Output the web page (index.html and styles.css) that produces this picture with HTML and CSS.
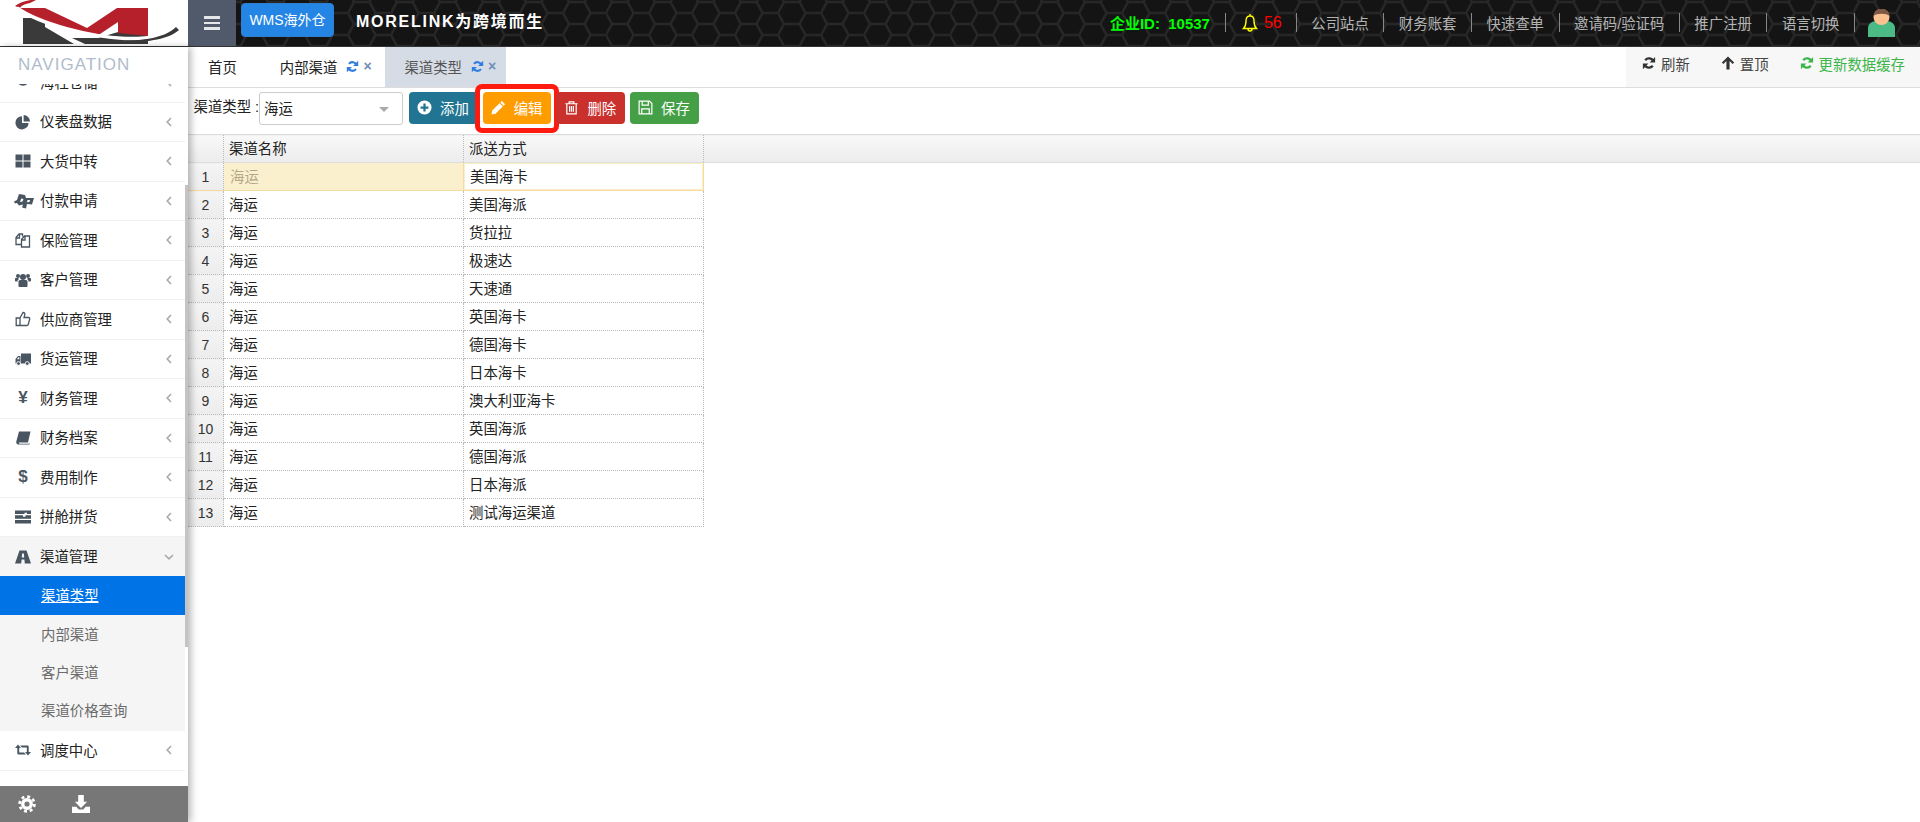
FILE: index.html
```html
<!DOCTYPE html>
<html lang="zh-CN">
<head>
<meta charset="utf-8">
<title>渠道类型</title>
<link rel="stylesheet" href="styles.css">
</head>
<body>
<svg class="defs" aria-hidden="true">
  <defs>
    <symbol id="i-pie" viewBox="0 0 16 16"><path d="M7 2.2a6.600 6.600 0 1 0 6.600 6.800H7z"/><path d="M8.600 1v6.400H15A6.500 6.500 0 0 0 8.600 1z"/></symbol>
    <symbol id="i-th" viewBox="0 0 16 16"><path d="M.5 1.500h7v6h-7zM8.500 1.500h7v6h-7zM.5 8.500h7v6h-7zM8.500 8.500h7v6h-7z"/></symbol>
    <symbol id="i-pay" viewBox="0 0 20 16"><path fill-rule="evenodd" d="M0 8.500l3-1.500L5 1l6 1 1 3 8 0-2 6.500-5-.5-1 4.500-4-1 1-3-4 1-2-2.500-2 .5zM7.200 5.500L6 9l2.500-.5 1-2.500zM13.500 7l-.5 2.200 2.500-.2.500-2z"/></symbol>
    <symbol id="i-files" viewBox="0 0 16 16"><path class="ol" d="M6 12.500H1V5.500l3-3.500h3.500v2.500M1 6h3.500V2.500M6.500 7.500l3-3.500h5v11h-8zM6.500 8h3.500V4.500"/></symbol>
    <symbol id="i-users" viewBox="0 0 16 16"><circle cx="8" cy="5" r="3"/><circle cx="3" cy="4" r="2"/><circle cx="13" cy="4" r="2"/><path d="M3.500 9.500c0-1 1-1.500 2-1.500h5c1 0 2 .5 2 1.500V14c0 .6-.5 1-1 1h-7c-.5 0-1-.4-1-1z"/><path d="M0 7c0-.6.4-1 1-1h2l1 1c-1 .5-1.500 1-1.500 2.500H1c-.6 0-1-.4-1-1zM16 7c0-.6-.4-1-1-1h-2l-1 1c1 .5 1.500 1 1.500 2.500H15c.6 0 1-.4 1-1z"/></symbol>
    <symbol id="i-thumb" viewBox="0 0 16 16"><path class="ol" d="M5 7l3-5.500c1.500 0 2.200 1 1.700 2.500L9 6.500h4.500c1 0 1.400 1 1.100 2l-1.400 5c-.2.7-.7 1-1.500 1H5zM1.200 7H5v7.500H1.200z"/></symbol>
    <symbol id="i-truck" viewBox="0 0 16 16"><path d="M6 2.500h10v10H6zM5.500 5H3L.5 8v4.500h5z"/><path class="cabw" d="M3.300 6.200h1v2H2z"/><circle class="wheel" cx="3.500" cy="12.500" r="1.900"/><circle class="wheel" cx="12.200" cy="12.500" r="1.900"/></symbol>
    <symbol id="i-book" viewBox="0 0 16 16"><path d="M4 1.500h11.500L13 12.500H4.500c-1 0-1 1.200 0 1.200H14l.5-1.500v2.300H3.500C1.500 14.500 1 13 1.300 11.500z"/></symbol>
    <symbol id="i-bars" viewBox="0 0 16 16"><path d="M0 1.500h16V5h-4V3.800H9.500V5H0zM0 6.200h8v1.500h2.500V6.200H16v3.500H0zM0 11h16v3.500H0z"/></symbol>
    <symbol id="i-road" viewBox="0 0 16 16"><path fill-rule="evenodd" d="M4.500 1.500h7l4.500 13H9.800l-.4-4H6.600l-.4 4H0zM7.100 4.500h1.800l.3 4H6.800z"/></symbol>
    <symbol id="i-retweet" viewBox="0 0 16 16"><path d="M0 6l3-3.500L6 6H4.200v4.500H9l2 2H3.500c-.7 0-1.200-.5-1.200-1.200V6zM16 10l-3 3.500-3-3.500h1.800V5.500H7l-2-2h7.500c.7 0 1.200.5 1.200 1.200V10z"/></symbol>
    <symbol id="i-refresh" viewBox="0 0 16 16"><path class="ol2" d="M13 6.500A5.300 5.300 0 0 0 3.700 4.800M3 9.500a5.300 5.300 0 0 0 9.300 1.700"/><path d="M15 1v6.300H8.700zM1 15V8.700h6.300z"/></symbol>
    <symbol id="i-up" viewBox="0 0 16 16"><path d="M8 .5l7 7-1.700 1.700-3.500-3.500v9.800H6.200V5.700L2.700 9.200 1 7.500z"/></symbol>
    <symbol id="i-plus" viewBox="0 0 16 16"><path fill-rule="evenodd" d="M8 .5a7.500 7.500 0 1 0 0 15 7.500 7.500 0 0 0 0-15zM6.800 3.800h2.400v3h3v2.400h-3v3H6.800v-3h-3V6.800h3z"/></symbol>
    <symbol id="i-pencil" viewBox="0 0 16 16"><path d="M11.500 1L15 4.500l-1.600 1.600-3.500-3.500zM9.100 3.400l3.500 3.500-7.800 7.800-4.300.8.8-4.300z"/></symbol>
    <symbol id="i-trash" viewBox="0 0 16 16"><path class="ol" d="M1.500 4h13M5.500 4V2h5v2M3 4v10.800h10V4M6 6.500v6M8 6.500v6M10 6.500v6"/></symbol>
    <symbol id="i-save" viewBox="0 0 16 16"><path class="ol" d="M1.200 1.200h11l2.600 2.600v11H1.200zM4.500 1.500v4h6.500v-4M4 14.500v-5h8v5"/></symbol>
    <symbol id="i-gear" viewBox="0 0 16 16"><circle class="gear-t" cx="8" cy="8" r="6.600"/><circle class="gear-r" cx="8" cy="8" r="3.800"/></symbol>
    <symbol id="i-down" viewBox="0 0 16 16"><path d="M5.500 0h5v6h3L8 11.500 2.500 6h3zM0 10.500h3.800L6 12.800h4l2.200-2.300H16V16H0z"/></symbol>
    <symbol id="i-anchor" viewBox="0 0 16 16"><path class="ol" d="M1 3c1 5 4 8 7 8s6-3 7-8M8 3v8M4 8l4 3 4-3"/></symbol>
    <symbol id="i-left" viewBox="0 0 6 10"><path class="chev" d="M5 1L1.200 5 5 9"/></symbol>
    <symbol id="i-chevd" viewBox="0 0 10 6"><path class="chev" d="M1 1l4 3.800L9 1"/></symbol>
  </defs>
</svg>

<header class="topbar">
  <svg class="hex" aria-hidden="true">
    <defs>
      <pattern id="hexp" x="4" y="2" width="43" height="22" patternUnits="userSpaceOnUse">
        <path d="M0 11L6 0H21.500L27.500 11L21.500 22H6ZM27.500 11H43" fill="none" stroke="#272727" stroke-width="2.500"/>
      </pattern>
    </defs>
    <rect width="100%" height="100%" fill="url(#hexp)"/>
  </svg>
  <a class="logo">
    <svg viewBox="0 0 188 46" width="188" height="46" aria-label="logo">
      <path fill="#3a3a3a" d="M23 18h22v26H23zM45 27l29 17H45zM72 38l26 0 20-6v12H85zM118 30h30v14h-30z"/>
      <path fill="#b5202a" d="M20 8h25l42 20 30-20h31v28l-30-3V22l-18 12h-8C60 30 35 20 20 8zM15 6C20 2 28 0 38-1L30 3c-6 1-9 3-10 5z"/>
      <path fill="none" stroke="#fff" stroke-width="3.500" d="M17 8C40 24 90 37 125 38.500c20 .5 40-2 52-9"/>
      <path fill="#3a3a3a" d="M105 40c28 2 58 0 71-13l3 3c-13 12-48 14-74 11z"/>
    </svg>
  </a>
  <button class="burger" aria-label="menu"><span></span><span></span><span></span></button>
  <a class="wms">WMS海外仓</a>
  <h1 class="brand">MORELINK为跨境而生</h1>
  <nav class="topnav">
    <span class="corp">企业ID:&nbsp;&nbsp;10537</span>
    <i class="sep"></i>
    <span class="alert">
      <svg class="bell" viewBox="0 0 16 20"><path d="M8 3C5 3 4 5 4 8c0 3.500-1 6-2.500 7.500h13C13 14 12 11.500 12 8c0-3-1-5-4-5zM6 16a2 2 0 0 0 4 0M8 1v2"/></svg>
      <b>56</b>
    </span>
    <i class="sep"></i><a>公司站点</a>
    <i class="sep"></i><a>财务账套</a>
    <i class="sep"></i><a>快速查单</a>
    <i class="sep"></i><a>邀请码/验证码</a>
    <i class="sep"></i><a>推广注册</a>
    <i class="sep"></i><a>语言切换</a>
    <i class="sep"></i>
    <svg class="avatar" viewBox="0 0 27 28"><path fill="#4cba85" d="M0 28v-9c0-4 4-7 8-7h11c4 0 8 3 8 7v9z"/><circle cx="13.500" cy="8" r="8" fill="#fbc190"/><path fill="#7e5a46" d="M5.500 7a8 7.500 0 0 1 16 0c-3-3-13-3-16 0z"/></svg>
  </nav>
</header>

<div class="shell">
  <aside class="sidebar">
    <div class="navhead">NAVIGATION</div>
    <div class="navscroll">
      <ul class="menu">
        <li class="item first"><svg class="ic"><use href="#i-anchor"/></svg><span>海柱仓储</span><svg class="ar"><use href="#i-left"/></svg></li>
        <li class="item"><svg class="ic"><use href="#i-pie"/></svg><span>仪表盘数据</span><svg class="ar"><use href="#i-left"/></svg></li>
        <li class="item"><svg class="ic"><use href="#i-th"/></svg><span>大货中转</span><svg class="ar"><use href="#i-left"/></svg></li>
        <li class="item"><svg class="ic wide"><use href="#i-pay"/></svg><span>付款申请</span><svg class="ar"><use href="#i-left"/></svg></li>
        <li class="item"><svg class="ic"><use href="#i-files"/></svg><span>保险管理</span><svg class="ar"><use href="#i-left"/></svg></li>
        <li class="item"><svg class="ic"><use href="#i-users"/></svg><span>客户管理</span><svg class="ar"><use href="#i-left"/></svg></li>
        <li class="item"><svg class="ic"><use href="#i-thumb"/></svg><span>供应商管理</span><svg class="ar"><use href="#i-left"/></svg></li>
        <li class="item"><svg class="ic"><use href="#i-truck"/></svg><span>货运管理</span><svg class="ar"><use href="#i-left"/></svg></li>
        <li class="item"><em class="ic gl">¥</em><span>财务管理</span><svg class="ar"><use href="#i-left"/></svg></li>
        <li class="item"><svg class="ic"><use href="#i-book"/></svg><span>财务档案</span><svg class="ar"><use href="#i-left"/></svg></li>
        <li class="item"><em class="ic gl">$</em><span>费用制作</span><svg class="ar"><use href="#i-left"/></svg></li>
        <li class="item"><svg class="ic"><use href="#i-bars"/></svg><span>拼舱拼货</span><svg class="ar"><use href="#i-left"/></svg></li>
        <li class="item open"><svg class="ic"><use href="#i-road"/></svg><span>渠道管理</span><svg class="ar"><use href="#i-chevd"/></svg></li>
        <li class="sub active"><span>渠道类型</span></li>
        <li class="sub"><span>内部渠道</span></li>
        <li class="sub"><span>客户渠道</span></li>
        <li class="sub last"><span>渠道价格查询</span></li>
        <li class="item"><svg class="ic"><use href="#i-retweet"/></svg><span>调度中心</span><svg class="ar"><use href="#i-left"/></svg></li>
      </ul>
      <div class="thumb"></div>
    </div>
    <footer class="sidefoot">
      <svg class="fi"><use href="#i-gear"/></svg>
      <svg class="fi"><use href="#i-down"/></svg>
    </footer>
  </aside>

  <main class="main">
    <div class="tabbar">
      <div class="tabs">
        <a class="tab home">首页</a>
        <a class="tab">内部渠道<svg class="tr"><use href="#i-refresh"/></svg><span class="tx">×</span></a>
        <a class="tab current">渠道类型<svg class="tr"><use href="#i-refresh"/></svg><span class="tx">×</span></a>
      </div>
      <div class="tools">
        <a class="tool"><svg><use href="#i-refresh"/></svg>刷新</a>
        <a class="tool"><svg><use href="#i-up"/></svg>置顶</a>
        <a class="tool green"><svg><use href="#i-refresh"/></svg>更新数据缓存</a>
      </div>
    </div>

    <div class="toolbar">
      <label class="lbl">渠道类型 :</label>
      <div class="select">海运<i class="caret"></i></div>
      <div class="btns">
        <a class="btn teal"><svg><use href="#i-plus"/></svg>添加</a>
        <a class="btn orange marked"><svg><use href="#i-pencil"/></svg>编辑</a>
        <a class="btn red"><svg><use href="#i-trash"/></svg>删除</a>
        <a class="btn green"><svg><use href="#i-save"/></svg>保存</a>
      </div>
    </div>

    <table class="grid">
      <colgroup><col class="c0"><col class="c1"><col class="c2"><col></colgroup>
      <thead><tr><th></th><th>渠道名称</th><th>派送方式</th><th class="rest"></th></tr></thead>
      <tbody>
        <tr class="editing"><td class="n">1</td><td class="ro">海运</td><td class="ed">美国海卡</td></tr>
        <tr><td class="n">2</td><td>海运</td><td>美国海派</td></tr>
        <tr><td class="n">3</td><td>海运</td><td>货拉拉</td></tr>
        <tr><td class="n">4</td><td>海运</td><td>极速达</td></tr>
        <tr><td class="n">5</td><td>海运</td><td>天速通</td></tr>
        <tr><td class="n">6</td><td>海运</td><td>英国海卡</td></tr>
        <tr><td class="n">7</td><td>海运</td><td>德国海卡</td></tr>
        <tr><td class="n">8</td><td>海运</td><td>日本海卡</td></tr>
        <tr><td class="n">9</td><td>海运</td><td>澳大利亚海卡</td></tr>
        <tr><td class="n">10</td><td>海运</td><td>英国海派</td></tr>
        <tr><td class="n">11</td><td>海运</td><td>德国海派</td></tr>
        <tr><td class="n">12</td><td>海运</td><td>日本海派</td></tr>
        <tr><td class="n">13</td><td>海运</td><td>测试海运渠道</td></tr>
      </tbody>
    </table>
  </main>
</div>
</body>
</html>
```

FILE: styles.css
```css
* { box-sizing: border-box; }
html, body { height: 100%; }
body {
  margin: 0;
  height: 822px;
  overflow: hidden;
  background: #fff;
  color: #222;
  font: 14.4px "Liberation Sans", "Noto Sans CJK SC", sans-serif;
  display: flex;
  flex-direction: column;
}
a { color: inherit; text-decoration: none; }
ul { list-style: none; margin: 0; padding: 0; }
.defs { width: 0; height: 0; position: absolute; }
.ol { fill: none; stroke: currentColor; stroke-width: 1.3; }
.ol2 { fill: none; stroke: currentColor; stroke-width: 2.6; }
.chev { fill: none; stroke: #aaa; stroke-width: 1.6; }
.gear-t { fill: none; stroke: currentColor; stroke-width: 2.4; stroke-dasharray: 2.6 2.58; }
.gear-r { fill: none; stroke: currentColor; stroke-width: 3; }
.wheel { fill: currentColor; stroke: #fff; stroke-width: .9; }
.cabw { fill: #fff; }

/* top bar */
.topbar {
  position: relative;
  flex: none;
  height: 47px;
  display: flex;
  align-items: center;
  background: #141414;
  border-bottom: 1px solid #333;
}
.hex { position: absolute; inset: 0; width: 100%; height: 100%; }
.logo { position: relative; flex: none; width: 188px; height: 46px; background: #fff; overflow: hidden; }
.logo svg { display: block; filter: blur(.5px); }
.burger {
  position: relative;
  flex: none;
  width: 48px;
  height: 46px;
  padding: 0;
  border: 0;
  background: #505a6b;
  display: flex;
  flex-direction: column;
  justify-content: center;
  align-items: center;
  gap: 3px;
}
.burger span { width: 16px; height: 2.4px; background: #e4e6ea; }
.wms {
  position: relative;
  margin-left: 5px;
  width: 93px;
  height: 34px;
  margin-bottom: 6px;
  line-height: 32px;
  text-align: center;
  font-size: 14px;
  background: #2585e4;
  border: 1px solid #2f7fd0;
  border-radius: 4px;
  color: #fff;
}
.brand {
  position: relative;
  margin: 0 0 6px 22px;
  font-size: 16px;
  font-weight: 700;
  letter-spacing: 1.75px;
  color: #fff;
}
.topnav {
  position: relative;
  margin-left: auto;
  padding-right: 25px;
  display: flex;
  align-items: center;
  color: #b4b4b4;
  margin-bottom: 1px;
}
.topnav a { padding: 0 14.5px; }
.sep { width: 1px; height: 19px; background: #888; }
.corp { color: #0f0; font-size: 15px; font-weight: 700; margin-right: 15px; }
.alert { display: flex; align-items: center; padding: 0 14px 0 16px; }
.bell { width: 16px; height: 20px; fill: none; stroke: #ff0; stroke-width: 1.4; }
.alert b { margin-left: 6px; color: #f00; font-size: 16px; font-weight: 400; }
.avatar { width: 27px; height: 28px; margin-left: 13px; }

/* shell */
.shell { flex: 1; min-height: 0; display: flex; }
.sidebar {
  position: relative;
  z-index: 2;
  flex: none;
  width: 188px;
  display: flex;
  flex-direction: column;
  background: #fff;
  box-shadow: 3px 0 7px rgba(0, 0, 0, .28);
}
.navhead {
  flex: none;
  height: 37px;
  padding: 8px 0 0 18px;
  font-size: 17px;
  line-height: 20px;
  letter-spacing: 1px;
  color: #b0bccc;
}
.navscroll { position: relative; flex: 1; min-height: 0; overflow: hidden; padding-right: 3px; }
.thumb { position: absolute; top: 101px; right: 0; width: 3px; height: 462px; background: #c4c4c4; }
.item {
  height: 39.5px;
  display: flex;
  align-items: center;
  border-bottom: 1px solid #f0f0f0;
  padding-left: 14px;
  color: #222;
}
.item > span { margin-bottom: 2px; }
.item.first { margin-top: -21px; }
.item.open { height: 39px; background: #f5f5f5; border-bottom: 0; }
.ic {
  flex: none;
  width: 16px;
  height: 16px;
  margin-left: 1px;
  margin-right: 9px;
  color: #4a5562;
  fill: currentColor;
}
.ic.wide { width: 20px; margin-left: 0; margin-right: 6px; }
.gl {
  font-style: normal;
  font-weight: 700;
  font-size: 17px;
  line-height: 16px;
  text-align: center;
}
.ar { margin-left: auto; margin-right: 13px; width: 6px; height: 10px; }
.open .ar { width: 10px; height: 6px; margin-right: 11px; }
.sub {
  height: 38px;
  display: flex;
  align-items: center;
  padding-left: 41px;
  padding-bottom: 2px;
  background: #f5f5f5;
  color: #6b6b6b;
}
.sub.active { height: 39px; background: #0073e6; color: #fff; }
.sub.active span { text-decoration: underline; }
.sub.last { height: 40px; padding-bottom: 4px; }
.sidefoot {
  flex: none;
  height: 36px;
  display: flex;
  align-items: center;
  gap: 36px;
  padding-left: 18px;
  background: #777;
}
.fi { width: 18px; height: 18px; color: #fff; fill: currentColor; }

/* main */
.main { flex: 1; min-width: 0; display: flex; flex-direction: column; }
.tabbar {
  flex: none;
  height: 41px;
  display: flex;
  justify-content: space-between;
  border-bottom: 1px solid #ddd;
}
.tabs { display: flex; gap: 4px; padding-left: 1px; }
.tab {
  display: flex;
  align-items: center;
  padding: 0 10px 2px 19px;
  color: #222;
}
.tab.home { padding-right: 20px; }
.tab.current { background: #d5dce6; color: #555; }
.tr { width: 13px; height: 13px; margin-left: 9px; color: #2f7de1; fill: currentColor; }
.tx { margin-left: 4px; width: 8px; color: #6f8db5; font-size: 14px; font-weight: 700; line-height: 12px; }
.tools {
  width: 294px;
  display: flex;
  align-items: center;
  padding: 0 0 8px 16px;
  gap: 31px;
  background: #f7f7f7;
}
.tool { display: flex; align-items: center; color: #444; gap: 5px; white-space: nowrap; }
.tool svg { width: 14px; height: 14px; fill: currentColor; color: #333; }
.tool.green { color: #3cb54a; }
.tool.green svg { color: #3cb54a; }

.toolbar {
  flex: none;
  height: 46px;
  display: flex;
  align-items: flex-start;
  padding: 4px 0 0 5.500px;
}
.lbl { width: 65.500px; line-height: 30px; white-space: nowrap; color: #222; }
.select {
  position: relative;
  width: 144px;
  height: 33px;
  line-height: 32px;
  padding-left: 4px;
  background: #fff;
  border: 1px solid #ccc;
  border-radius: 3px;
  color: #222;
}
.caret {
  position: absolute;
  right: 13px;
  top: 14px;
  border-left: 5px solid transparent;
  border-right: 5px solid transparent;
  border-top: 5px solid #aaa;
}
.btns { display: flex; gap: 5px; margin-left: 6px; }
.btn {
  position: relative;
  width: 68.700px;
  height: 32px;
  display: flex;
  align-items: center;
  gap: 8px;
  padding: 0 0 1px 8px;
  border-radius: 4px;
  color: #fff;
}
.btn svg { flex: none; width: 15px; height: 15px; fill: currentColor; }
.btn.teal { background: #227592; }
.btn.orange { background: #ff9c00; }
.btn.red { background: #ca302c; }
.btn.green { background: #449f47; }
.marked::after {
  content: "";
  position: absolute;
  inset: -8px -8px -9px -8px;
  border: 5px solid #ff1a0f;
  border-radius: 7px;
  box-shadow: inset 0 0 0 3px #fff;
}

/* grid */
.grid { width: 100%; table-layout: fixed; border-collapse: collapse; color: #222; }
.c0 { width: 35.500px; }
.c1, .c2 { width: 240px; }
.grid th, .grid td {
  padding: 0 0 2px 5px;
  border-right: 1px dotted #bbb;
  border-bottom: 1px dotted #bbb;
  text-align: left;
  font-weight: 400;
  white-space: nowrap;
}
.grid thead tr { height: 28px; }
.grid th {
  background: linear-gradient(#f8f8f8, #ececec);
  border-top: 1px solid #ddd;
  border-bottom: 1px solid #ddd;
}
.grid th.rest { border-right: 0; }
.grid tbody tr { height: 28px; }
.grid td.n {
  padding: 0;
  font-size: 14px;
  text-align: center;
  background: linear-gradient(#f4f4f4, #ececec);
  color: #333;
}
.editing td { border-bottom: 1px solid #f5dc9c; }
.grid td.ro { padding-left: 6px; background: #fbf0cd; color: #b3a98a; border-top: 1px solid #eadfb8; }
.grid td.ed { padding-left: 6px; background: #fff; border: 1px solid #f5dc9c; box-shadow: inset 0 0 0 1px #faeecb; }
```
